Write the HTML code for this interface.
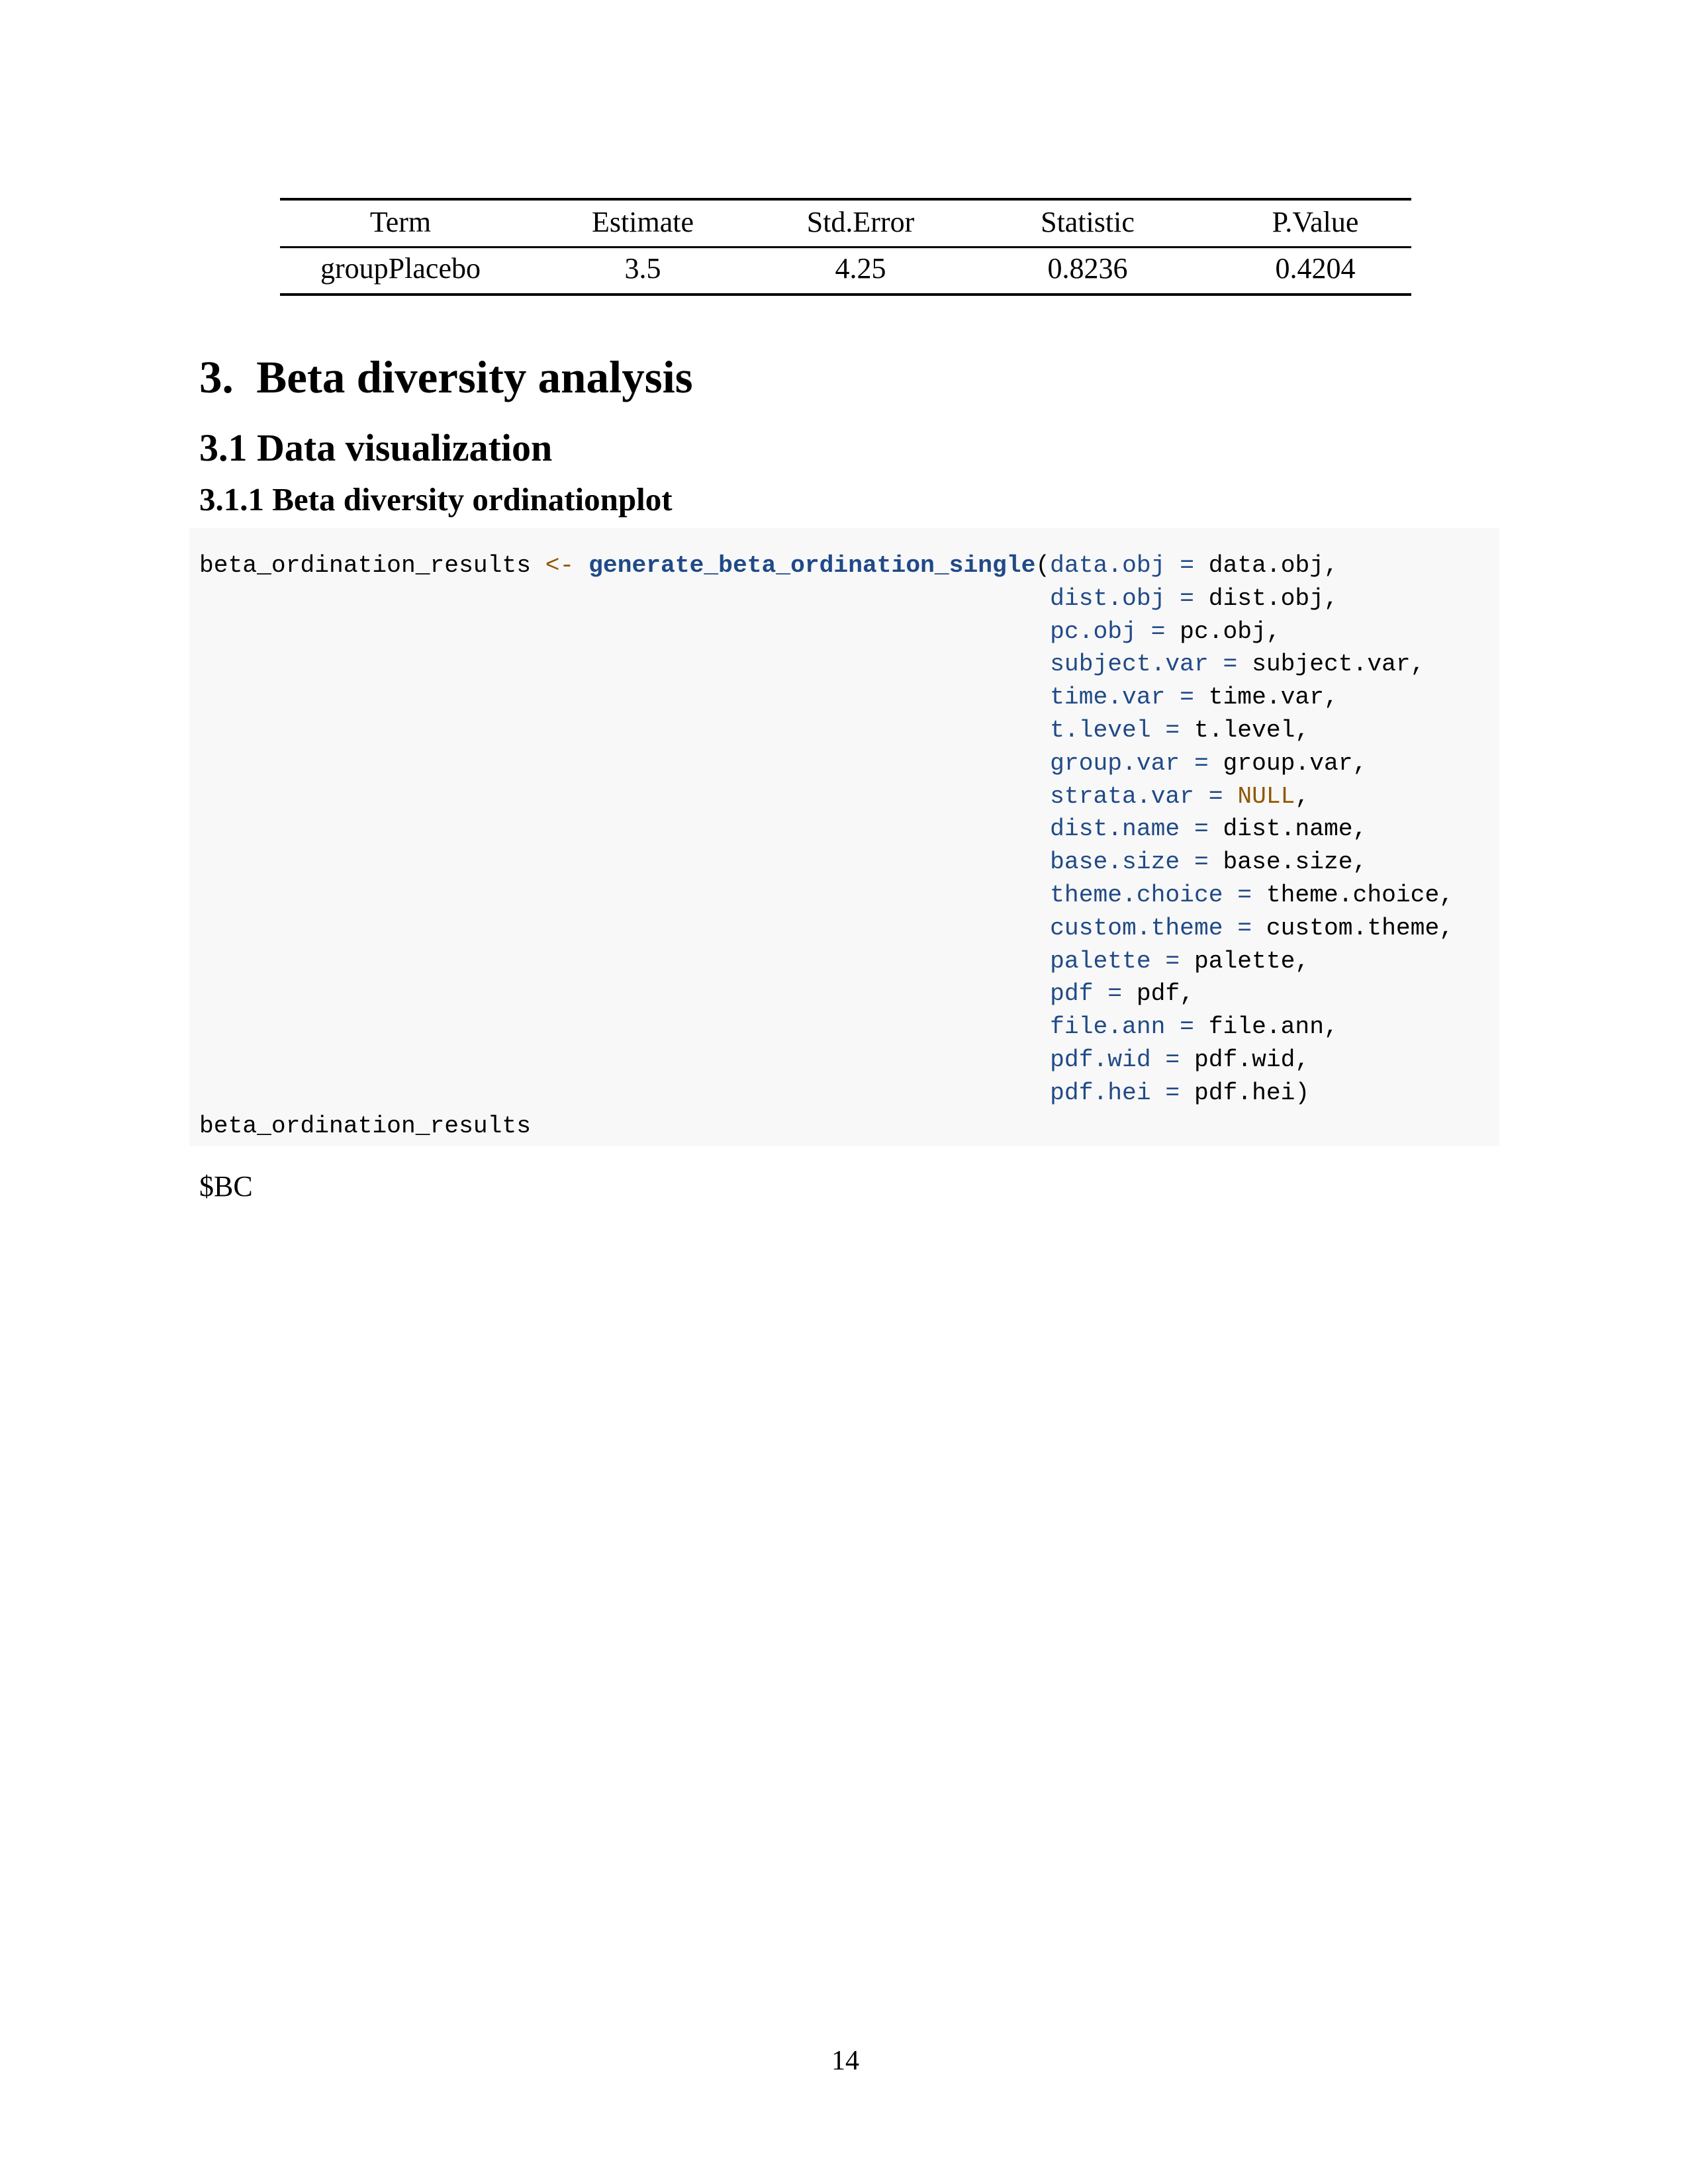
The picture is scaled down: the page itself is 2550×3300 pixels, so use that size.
<!DOCTYPE html>
<html><head><meta charset="utf-8"><style>
html,body{margin:0;padding:0;background:#fff;}
body{width:2550px;height:3300px;position:relative;overflow:hidden;font-family:"Liberation Serif",serif;color:#000;}
.a{position:absolute;white-space:pre;line-height:1;}
.rule{position:absolute;left:423px;width:1709px;background:#000;}
.c{position:absolute;width:400px;text-align:center;font-size:44px;line-height:1;}
.code{position:absolute;left:286px;top:798px;width:1979px;height:934px;background:#f8f8f8;}
pre{position:absolute;left:301px;top:830px;margin:0;font-family:"Liberation Mono",monospace;font-size:36.3px;line-height:49.8px;color:#000;}
.b{color:#204a87;}
.f{color:#204a87;font-weight:bold;}
.o{color:#8f5902;}
</style></head><body>
<div class="rule" style="top:299px;height:4px"></div>
<div class="rule" style="top:372px;height:3px"></div>
<div class="rule" style="top:443px;height:4px"></div>
<div class="c" style="left:405px;top:314px">Term</div>
<div class="c" style="left:771px;top:314px">Estimate</div>
<div class="c" style="left:1100px;top:314px">Std.Error</div>
<div class="c" style="left:1443px;top:314px">Statistic</div>
<div class="c" style="left:1787px;top:314px">P.Value</div>
<div class="c" style="left:405px;top:384px">groupPlacebo</div>
<div class="c" style="left:771px;top:384px">3.5</div>
<div class="c" style="left:1100px;top:384px">4.25</div>
<div class="c" style="left:1443px;top:384px">0.8236</div>
<div class="c" style="left:1787px;top:384px">0.4204</div>

<div class="a" style="left:301px;top:536px;font-size:69px;font-weight:bold">3.  Beta diversity analysis</div>
<div class="a" style="left:301px;top:648px;font-size:58px;font-weight:bold">3.1 Data visualization</div>
<div class="a" style="left:301px;top:730px;font-size:49px;font-weight:bold">3.1.1 Beta diversity ordinationplot</div>

<div class="code"></div>
<pre>beta_ordination_results <span class="o">&lt;-</span> <span class="f">generate_beta_ordination_single</span>(<span class="b">data.obj =</span> data.obj,
                                                           <span class="b">dist.obj =</span> dist.obj,
                                                           <span class="b">pc.obj =</span> pc.obj,
                                                           <span class="b">subject.var =</span> subject.var,
                                                           <span class="b">time.var =</span> time.var,
                                                           <span class="b">t.level =</span> t.level,
                                                           <span class="b">group.var =</span> group.var,
                                                           <span class="b">strata.var =</span> <span class="o">NULL</span>,
                                                           <span class="b">dist.name =</span> dist.name,
                                                           <span class="b">base.size =</span> base.size,
                                                           <span class="b">theme.choice =</span> theme.choice,
                                                           <span class="b">custom.theme =</span> custom.theme,
                                                           <span class="b">palette =</span> palette,
                                                           <span class="b">pdf =</span> pdf,
                                                           <span class="b">file.ann =</span> file.ann,
                                                           <span class="b">pdf.wid =</span> pdf.wid,
                                                           <span class="b">pdf.hei =</span> pdf.hei)
beta_ordination_results</pre>

<div class="a" style="left:301px;top:1771px;font-size:44px">$BC</div>
<div class="a" style="left:1227px;top:3093px;width:100px;text-align:center;font-size:42px">14</div>
</body></html>
